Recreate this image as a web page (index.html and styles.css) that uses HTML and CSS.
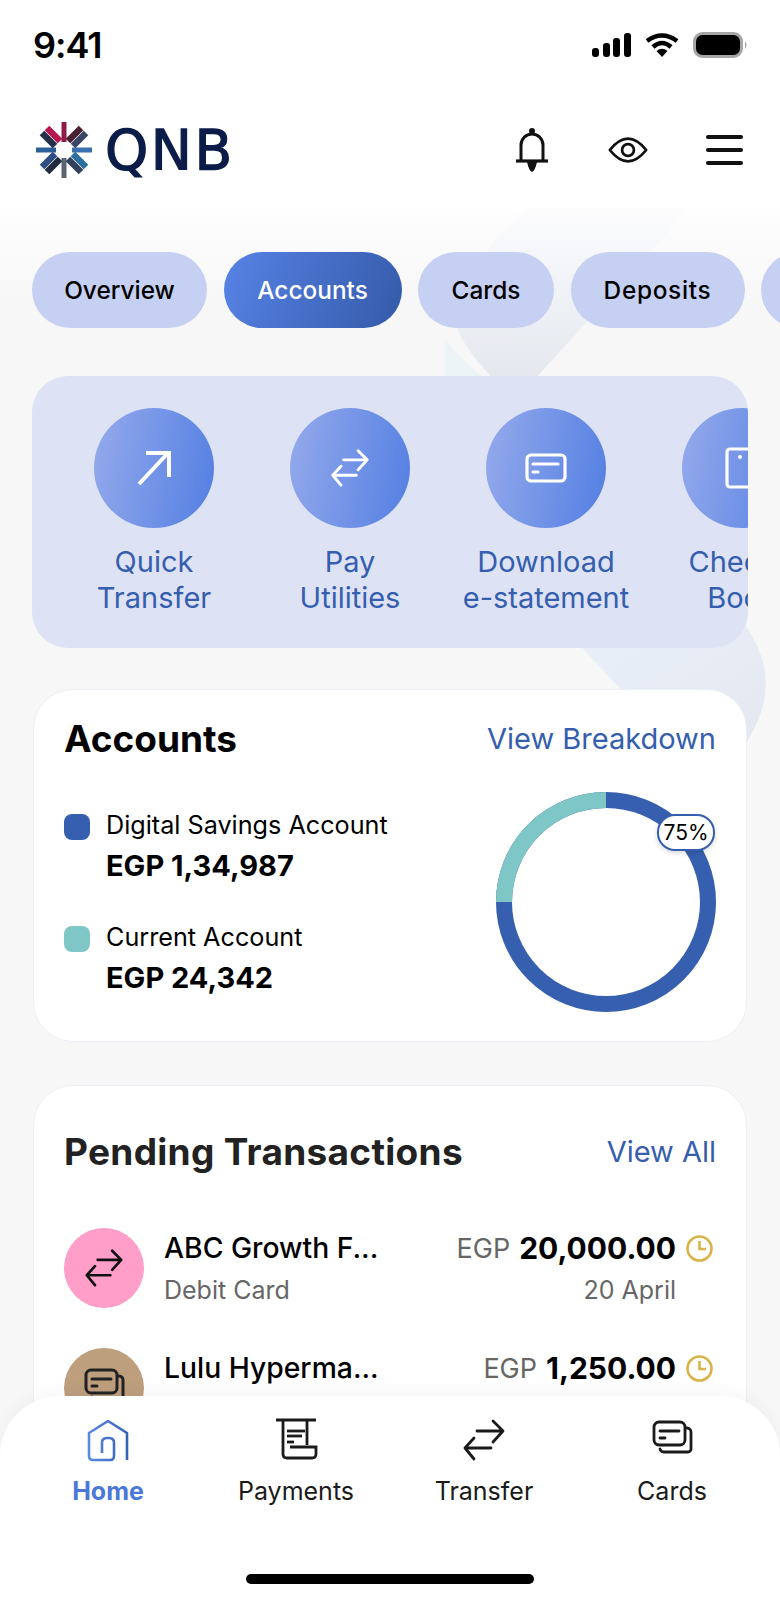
FILE: index.html
```html
<!DOCTYPE html>
<html>
<head>
    <meta charset="utf-8">
    <title>QNB</title>
    <link rel="stylesheet" href="styles.css">
</head>
<body>
<div class="phone">

    <!-- faint ribbon behind the content -->
    <svg class="ribbon" width="780" height="800" viewBox="0 0 780 800">
        <defs>
            <linearGradient id="ribbonA" x1="0" y1="0" x2="0" y2="1">
                <stop offset="0" stop-color="#fdfdfe"/>
                <stop offset="0.45" stop-color="#eff2f7"/>
                <stop offset="1" stop-color="#e4e6ed"/>
            </linearGradient>
            <linearGradient id="ribbonB" x1="0" y1="0" x2="1" y2="1">
                <stop offset="0" stop-color="#e8f0f9"/>
                <stop offset="1" stop-color="#e5e7f0"/>
            </linearGradient>
        </defs>
        <path d="M445 340 V390 H500 Q465 365 445 340Z" fill="#ecf4f8"/>
        <path d="M525 208 H690 L525 390 H505 Q440 330 458 295 Q470 265 525 208Z" fill="url(#ribbonA)"/>
        <path d="M570 635 L640 710 V760 H740 L748 740 Q785 680 745 625Z" fill="url(#ribbonB)"/>
    </svg>

    <div class="statusbar">
        <span class="time">9:41</span>
        <div class="status-icons">
            <svg width="39" height="24" viewBox="0 0 39 24" fill="#000">
                <rect x="0" y="15" width="7" height="9" rx="3"/>
                <rect x="11" y="10" width="7" height="14" rx="3"/>
                <rect x="21" y="5" width="7" height="19" rx="3"/>
                <rect x="32" y="0" width="7" height="24" rx="3"/>
            </svg>
            <svg width="34" height="24" viewBox="0 0 34 24" fill="none" stroke="#000" stroke-width="4.5">
                <path d="M2 8 Q17 -3 32 8"/>
                <path d="M8 14 Q17 6 26 14"/>
                <path d="M17 24 L11.5 18 Q17 13.5 22.5 18Z" fill="#000" stroke="none"/>
            </svg>
            <svg width="55" height="26" viewBox="0 0 55 26">
                <rect x="1.5" y="1.5" width="47" height="23" rx="8" fill="#000" stroke="#a6a6a6" stroke-width="3"/>
                <path d="M52 9 Q55 13 52 17Z" fill="#a6a6a6"/>
            </svg>
        </div>
    </div>

    <div class="header">
        <div class="logo">
            <svg width="56" height="56" viewBox="-28 -28 56 56" fill="none" stroke-width="6.5">
                <!-- top -->
                <path d="M0 -28 V-8" stroke="#8e1c49" stroke-width="5"/>
                <path d="M-4 -9 L-17 -22" stroke="#b5174f"/>
                <path d="M4 -9 L17 -22" stroke="#4a2033"/>
                <!-- bottom -->
                <path d="M0 28 V8" stroke="#5a6472" stroke-width="5"/>
                <path d="M-4 9 L-17 22" stroke="#232b3f"/>
                <path d="M4 9 L17 22" stroke="#33415a"/>
                <!-- left -->
                <path d="M-28 0 H-8" stroke="#2b5f98" stroke-width="5"/>
                <path d="M-9 -4 L-22 -17" stroke="#26304a"/>
                <path d="M-9 4 L-22 17" stroke="#2d4f86"/>
                <!-- right -->
                <path d="M28 0 H8" stroke="#3a6fb0" stroke-width="5"/>
                <path d="M9 -4 L22 -17" stroke="#3a4668"/>
                <path d="M9 4 L22 17" stroke="#2b6f9e"/>
            </svg>
            <span class="logo-text">QNB</span>
        </div>
        <div class="header-icons">
            <svg width="36" height="50" viewBox="0 0 36 50" fill="none" stroke="#111">
                <circle cx="18" cy="6" r="3" fill="#111" stroke="none"/>
                <path d="M7 36 V20 a11 11 0 0 1 22 0 V36" stroke-width="3"/>
                <path d="M2 36 H34" stroke-width="3.2"/>
                <path d="M13 37 H23 Q21 46 18 47 Q15 46 13 37Z" fill="#111" stroke="none"/>
            </svg>
            <svg width="40" height="28" viewBox="0 0 44 30" fill="none" stroke="#111" stroke-width="3">
                <path d="M2 15 Q22 -10 42 15 Q22 40 2 15Z" stroke-linejoin="round"/>
                <circle cx="22" cy="15" r="6.5"/>
            </svg>
            <div class="menu-icon"><span></span><span></span><span></span></div>
        </div>
    </div>

    <div class="main">

        <div class="tabs">
            <div class="tab tab-overview">Overview</div>
            <div class="tab tab-accounts tab-active">Accounts</div>
            <div class="tab tab-cards">Cards</div>
            <div class="tab tab-deposits">Deposits</div>
            <div class="tab tab-more"></div>
        </div>

        <div class="quick">
            <div class="quick-item">
                <div class="quick-circle">
                    <svg width="36" height="36" viewBox="0 0 36 36" fill="none" stroke="#fff" stroke-width="4">
                        <path d="M3 34 L32 3"/>
                        <path d="M10 3 H33 V27"/>
                    </svg>
                </div>
                <div class="quick-label">Quick<br>Transfer</div>
            </div>
            <div class="quick-item">
                <div class="quick-circle">
                    <svg width="38" height="38" viewBox="0 0 42 42" fill="none" stroke="#fff" stroke-width="3.2" stroke-linecap="round" stroke-linejoin="round">
                        <path d="M14 12 H40 M30 2 L40 12 L30 23"/>
                        <path d="M28 29 H2 M11 19 L2 29 L11 40"/>
                    </svg>
                </div>
                <div class="quick-label">Pay<br>Utilities</div>
            </div>
            <div class="quick-item">
                <div class="quick-circle">
                    <svg width="42" height="30" viewBox="0 0 42 30" fill="none" stroke="#fff" stroke-width="3.2" stroke-linecap="round">
                        <rect x="2" y="2" width="38" height="26" rx="4"/>
                        <path d="M8 11 H33"/>
                        <path d="M8 19 H13"/>
                    </svg>
                </div>
                <div class="quick-label">Download<br>e-statement</div>
            </div>
            <div class="quick-item">
                <div class="quick-circle">
                    <svg width="34" height="42" viewBox="0 0 34 42" fill="none" stroke="#fff" stroke-width="3.2">
                        <rect x="2" y="2" width="30" height="38" rx="3"/>
                        <circle cx="15" cy="10" r="2" fill="#fff" stroke="none"/>
                    </svg>
                </div>
                <div class="quick-label">Cheque<br>Book</div>
            </div>
        </div>

        <div class="card card-accounts">
            <div class="card-head">
                <div class="card-title">Accounts</div>
                <div class="card-link">View Breakdown</div>
            </div>
            <div class="accounts-body">
                <div class="legend">
                    <div class="legend-row">
                        <span class="dot dot-blue"></span>
                        <div>
                            <div class="legend-name">Digital Savings Account</div>
                            <div class="legend-value">EGP 1,34,987</div>
                        </div>
                    </div>
                    <div class="legend-row">
                        <span class="dot dot-teal"></span>
                        <div>
                            <div class="legend-name">Current Account</div>
                            <div class="legend-value">EGP 24,342</div>
                        </div>
                    </div>
                </div>
                <div class="donut">
                    <svg width="220" height="220" viewBox="0 0 220 220" fill="none" stroke-width="16">
                        <circle cx="110" cy="110" r="102" stroke="#365fb0"/>
                        <path d="M8 110 A102 102 0 0 1 110 8" stroke="#7fc6c6"/>
                    </svg>
                    <div class="donut-badge">75%</div>
                </div>
            </div>
        </div>

        <div class="card card-pending">
            <div class="card-head">
                <div class="card-title card-title-dark">Pending Transactions</div>
                <div class="card-link">View All</div>
            </div>

            <div class="tx">
                <div class="tx-icon tx-pink">
                    <svg width="38" height="38" viewBox="0 0 42 42" fill="none" stroke="#111" stroke-width="3" stroke-linecap="round" stroke-linejoin="round">
                        <path d="M14 12 H40 M30 2 L40 12 L30 23"/>
                        <path d="M28 29 H2 M11 19 L2 29 L11 40"/>
                    </svg>
                </div>
                <div class="tx-left">
                    <div class="tx-name">ABC Growth F...</div>
                    <div class="tx-sub">Debit Card</div>
                </div>
                <div class="tx-right">
                    <div class="tx-amount">
                        <span class="tx-cur">EGP</span>
                        <span class="tx-num">20,000.00</span>
                        <svg class="clock" width="27" height="27" viewBox="0 0 27 27" fill="none" stroke="#d9b44a" stroke-width="2.6">
                            <circle cx="13.5" cy="13.5" r="12"/>
                            <path d="M13.5 6 V14 H20"/>
                        </svg>
                    </div>
                    <div class="tx-sub tx-date">20 April</div>
                </div>
            </div>

            <div class="tx">
                <div class="tx-icon tx-brown">
                    <svg width="42" height="42" viewBox="0 0 42 42" fill="none" stroke="#222" stroke-width="3" stroke-linecap="round">
                        <rect x="3" y="3" width="31" height="23" rx="5"/>
                        <path d="M35 9 h1 a4 4 0 0 1 4 4 v17 a3 3 0 0 1 -3 3 H13 a4 4 0 0 1 -4 -3"/>
                        <path d="M9 12 H28"/>
                        <path d="M9 19 H14"/>
                    </svg>
                </div>
                <div class="tx-left">
                    <div class="tx-name">Lulu Hyperma...</div>
                    <div class="tx-sub">Debit Card</div>
                </div>
                <div class="tx-right">
                    <div class="tx-amount">
                        <span class="tx-cur">EGP</span>
                        <span class="tx-num">1,250.00</span>
                        <svg class="clock" width="27" height="27" viewBox="0 0 27 27" fill="none" stroke="#d9b44a" stroke-width="2.6">
                            <circle cx="13.5" cy="13.5" r="12"/>
                            <path d="M13.5 6 V14 H20"/>
                        </svg>
                    </div>
                </div>
            </div>
        </div>

    </div>

    <div class="nav">
        <div class="nav-items">
            <div class="nav-item nav-active">
                <svg width="44" height="44" viewBox="0 0 44 44" fill="none" stroke="url(#homeGrad)" stroke-width="2.6" stroke-linejoin="round">
                    <defs>
                        <linearGradient id="homeGrad" gradientUnits="userSpaceOnUse" x1="2" y1="0" x2="42" y2="0">
                            <stop offset="0" stop-color="#5b8ae6"/>
                            <stop offset="1" stop-color="#3560b4"/>
                        </linearGradient>
                    </defs>
                    <path d="M41 42 V15 L22 3 L3 15 V38 q0 4 4 4 H24 q4 0 4 -4 V25 q0 -5 -5 -5 h-2 q-5 0 -5 5 V35"/>
                </svg>
                <span>Home</span>
            </div>
            <div class="nav-item">
                <svg width="44" height="44" viewBox="0 0 44 44" fill="none" stroke="#1a1a1a" stroke-width="2.8">
                    <path d="M2 2 H42"/>
                    <path d="M9 2 V36 q0 4 4 4 H38 q4 0 4 -4 V29 H16"/>
                    <path d="M33 2 V27"/>
                    <path d="M13 13 H31"/>
                    <path d="M13 18 H28"/>
                    <path d="M13 24 H20"/>
                </svg>
                <span>Payments</span>
            </div>
            <div class="nav-item">
                <svg width="44" height="44" viewBox="0 0 44 44" fill="none" stroke="#1a1a1a" stroke-width="2.8" stroke-linecap="round" stroke-linejoin="round">
                    <path d="M15 13 H41 M31 3 L41 13 L31 24"/>
                    <path d="M29 30 H3 M12 20 L3 30 L12 41"/>
                </svg>
                <span>Transfer</span>
            </div>
            <div class="nav-item">
                <svg width="44" height="44" viewBox="-1 -1 44 44" fill="none" stroke="#1a1a1a" stroke-width="2.8" stroke-linecap="round">
                    <rect x="3" y="3" width="31" height="23" rx="5"/>
                    <path d="M35 9 h1 a4 4 0 0 1 4 4 v17 a3 3 0 0 1 -3 3 H13 a4 4 0 0 1 -4 -3"/>
                    <path d="M9 12 H28"/>
                    <path d="M9 19 H14"/>
                </svg>
                <span>Cards</span>
            </div>
        </div>
        <div class="home-bar"></div>
    </div>

</div>
</body>
</html>
```

FILE: styles.css
```css
*{
    box-sizing: border-box;
}

body{
    margin: 0;
    background-color: #f7f7f8;
    font-family: Inter, "Liberation Sans", sans-serif;
    color: #000;
}

.phone{
    position: relative;
    width: 780px;
    height: 1600px;
    overflow: hidden;
    background: linear-gradient(180deg, #fff 208px, #fdfdfd 220px, #f7f7f7 300px);
}

.ribbon{
    position: absolute;
    top: 0;
    left: 0;
}

.statusbar{
    position: relative;
    height: 90px;
    display: flex;
    justify-content: space-between;
    align-items: center;
    padding: 0 32px 0 33px;
}

.time{
    font-size: 36px;
    font-weight: 600;
    letter-spacing: -1px;
}

.status-icons{
    display: flex;
    align-items: center;
    gap: 14px;
}

.header{
    position: relative;
    height: 120px;
    display: flex;
    justify-content: space-between;
    align-items: center;
    padding: 0 37px 0 36px;
}

.logo{
    display: flex;
    align-items: center;
    gap: 13px;
}

.logo-text{
    font-family: "DejaVu Sans", sans-serif;
    font-size: 55px;
    line-height: 56px;
    color: #0b1c48;
    letter-spacing: 2.5px;
    -webkit-text-stroke: 1.3px #0b1c48;
}

.header-icons{
    display: flex;
    align-items: center;
    gap: 58px;
}

.menu-icon{
    width: 37px;
    display: flex;
    flex-direction: column;
    gap: 9px;
}

.menu-icon span{
    height: 4px;
    border-radius: 2px;
    background-color: #111;
}

.main{
    position: relative;
    padding: 42px 32px 0;
}

.tabs{
    display: flex;
    gap: 16.5px;
    width: 748px;
}

.tab{
    flex: none;
    height: 76px;
    line-height: 76px;
    text-align: center;
    border-radius: 38px;
    background-color: #c6d0f2;
    font-size: 24.4px;
    font-weight: 500;
}

.tab-overview{
    width: 175px;
}

.tab-accounts{
    width: 178px;
}

.tab-cards{
    width: 136px;
}

.tab-deposits{
    width: 174px;
    letter-spacing: 0.7px;
}

.tab-more{
    width: 100px;
}

.tab-active{
    background: linear-gradient(110deg, #5783e6, #345aa8);
    color: #fff;
}

.quick{
    margin-top: 48px;
    height: 272px;
    padding: 32px 0 0 24px;
    display: flex;
    overflow: hidden;
    border-radius: 36px;
    background-color: #dde2f5;
}

.quick-item{
    flex: none;
    width: 196px;
    display: flex;
    flex-direction: column;
    align-items: center;
}

.quick-circle{
    width: 120px;
    height: 120px;
    border-radius: 50%;
    display: flex;
    align-items: center;
    justify-content: center;
    background: linear-gradient(100deg, #95aaec, #537fe2);
}

.quick-label{
    margin-top: 16px;
    font-size: 29px;
    line-height: 36px;
    text-align: center;
    color: #355eaf;
    white-space: nowrap;
}

.card{
    margin: 0 0 0 1px;
    width: 714px;
    padding: 0 30px;
    border: 1px solid #eeeff6;
    border-radius: 40px;
    background-color: #fff;
}

.card-accounts{
    margin-top: 41px;
    height: 353px;
    padding-top: 27px;
}

.card-pending{
    margin-top: 43px;
    height: 600px;
    padding-top: 44px;
}

.card-head{
    display: flex;
    justify-content: space-between;
    align-items: center;
    height: 42px;
}

.card-title{
    font-size: 37px;
    font-weight: 700;
}

.card-title-dark{
    color: #222;
    letter-spacing: 0.3px;
}

.card-link{
    font-size: 29px;
    color: #355eaf;
}

.accounts-body{
    margin-top: 33px;
    display: flex;
    justify-content: space-between;
}

.legend{
    padding-top: 17px;
    display: flex;
    flex-direction: column;
    gap: 37px;
}

.legend-row{
    display: flex;
    gap: 16px;
}

.dot{
    flex: none;
    width: 26px;
    height: 26px;
    margin-top: 5px;
    border-radius: 8px;
}

.dot-blue{
    background-color: #365fb0;
}

.dot-teal{
    background-color: #7fc6c6;
}

.legend-name{
    font-size: 25.2px;
    line-height: 32px;
}

.legend-value{
    margin-top: 7px;
    font-size: 29px;
    line-height: 36px;
    font-weight: 700;
}

.donut{
    position: relative;
    width: 220px;
    height: 220px;
}

.donut-badge{
    position: absolute;
    top: 22px;
    left: 161px;
    width: 58px;
    height: 37px;
    border: 2px solid #365fb0;
    border-radius: 18px;
    background-color: #fff;
    box-shadow: 0 2px 5px rgba(0,0,0,.15);
    font-size: 21px;
    line-height: 33px;
    text-align: center;
}

.tx{
    display: flex;
    gap: 20px;
    margin-bottom: 40px;
}

.card-head + .tx{
    margin-top: 56px;
}

.tx-icon{
    flex: none;
    width: 80px;
    height: 80px;
    border-radius: 50%;
    display: flex;
    align-items: center;
    justify-content: center;
}

.tx-pink{
    background-color: #ff9ec9;
}

.tx-brown{
    background-color: #bd9e7d;
}

.tx-left{
    padding-top: 2px;
}

.tx-name{
    font-size: 28.3px;
    line-height: 36px;
    font-weight: 500;
}

.tx-sub{
    margin-top: 6px;
    font-size: 25px;
    line-height: 36px;
    color: #666;
}

.tx-right{
    margin-left: auto;
    padding-top: 2px;
    text-align: right;
}

.tx-amount{
    display: flex;
    align-items: center;
    justify-content: flex-end;
    height: 36px;
}

.tx-cur{
    font-size: 27px;
    color: #666;
    margin-right: 9px;
}

.tx-num{
    font-size: 30px;
    font-weight: 700;
}

.clock{
    margin: 0 3px 0 10px;
}

.tx-date{
    padding-right: 40px;
}

.nav{
    position: absolute;
    left: 0;
    bottom: 0;
    width: 780px;
    height: 204px;
    display: flex;
    flex-direction: column;
    align-items: center;
    border-radius: 60px 60px 0 0;
    background-color: #fff;
    box-shadow: 0 -6px 16px rgba(0,0,0,.03);
}

.nav-items{
    width: 100%;
    display: grid;
    grid-template-columns: repeat(4, 1fr);
    padding: 22px 14px 0;
}

.nav-item{
    display: flex;
    flex-direction: column;
    align-items: center;
    gap: 13px;
    font-size: 25px;
    line-height: 32px;
    color: #1a1a1a;
}

.nav-active{
    color: #4a78d8;
    font-weight: 700;
}

.home-bar{
    margin-top: auto;
    margin-bottom: 16px;
    width: 288px;
    height: 10px;
    border-radius: 5px;
    background-color: #000;
}
```
